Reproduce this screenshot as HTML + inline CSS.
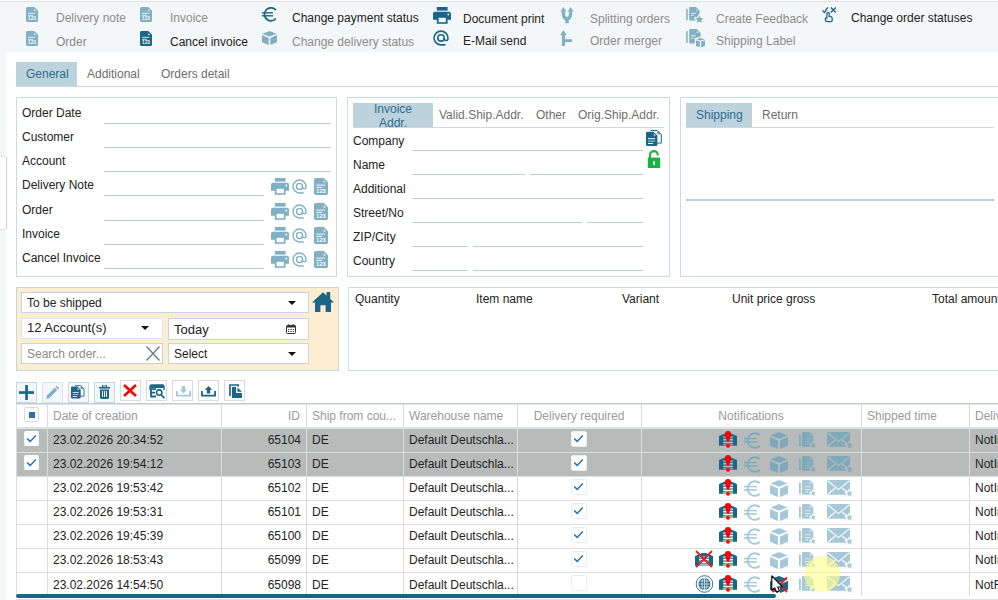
<!DOCTYPE html>
<html><head><meta charset="utf-8">
<style>
*{box-sizing:border-box;margin:0;padding:0}
html,body{width:998px;height:600px;overflow:hidden;background:#f3f7f7;font-family:"Liberation Sans",sans-serif;font-size:12px;color:#222}
.a{position:absolute}
.t{position:absolute;white-space:nowrap;line-height:14px}
#tb{left:0;top:0;width:998px;height:52px;background:#f3f7f7;border-top:1px solid #fff;box-shadow:inset 0 1px 0 #dfe2e2}
#main{left:6px;top:52px;width:992px;height:548px;background:#fff}
.dis{color:#8c8c8c}
.ic{position:absolute}
.box{position:absolute;border:1px solid #c9dbe4;background:#fff}
.lbl{position:absolute;white-space:nowrap;color:#222;line-height:14px}
.ul{position:absolute;height:1px;background:#b9d0dc}
.tab{position:absolute;white-space:nowrap;line-height:14px;color:#6e6e6e}
.tabon{position:absolute;background:#bcd3dd;color:#2d6e8e}
.inp{position:absolute;background:#fff;border:1px solid #c3d6df}
.btn{position:absolute;width:21px;height:21px;border:1px solid #dfe6ea;background:#f4f7f9}
.hd{position:absolute;white-space:nowrap;color:#9a9a9a;line-height:14px}
.cell{position:absolute;white-space:nowrap;color:#222;line-height:14px}
</style></head><body>
<div id="tb" class="a"></div>
<div id="main" class="a"></div>
<div class="a" style="left:0;top:157px;width:6px;height:72px;background:#fff;box-shadow:1px 0 0 #d2d2d2,0 0 2px rgba(0,0,0,.25)"></div>
<svg class="a" style="left:26px;top:7px" width="12" height="15" viewBox="0 0 12 15" ><g transform="scale(1.0 1.0)"><path d="M1.5 0H8.3L12 3.7V13.5A1.5 1.5 0 0 1 10.5 15H1.5A1.5 1.5 0 0 1 0 13.5V1.5A1.5 1.5 0 0 1 1.5 0Z" fill="#7fb0c4"/><path d="M8.2 2V4H10.2Z" fill="#f3f7f7"/><rect x="2" y="5.8" width="7.5" height="0.9" fill="#f3f7f7" opacity=".9"/><rect x="2" y="7.8" width="5" height="0.9" fill="#f3f7f7" opacity=".9"/><text x="6" y="13.2" text-anchor="middle" font-family="Liberation Sans" font-size="4.6" font-weight="bold" fill="#f3f7f7" textLength="8" lengthAdjust="spacingAndGlyphs">123</text></g></svg>
<svg class="a" style="left:26px;top:31px" width="12" height="15" viewBox="0 0 12 15" ><g transform="scale(1.0 1.0)"><path d="M1.5 0H8.3L12 3.7V13.5A1.5 1.5 0 0 1 10.5 15H1.5A1.5 1.5 0 0 1 0 13.5V1.5A1.5 1.5 0 0 1 1.5 0Z" fill="#7fb0c4"/><path d="M8.2 2V4H10.2Z" fill="#f3f7f7"/><rect x="2" y="5.8" width="7.5" height="0.9" fill="#f3f7f7" opacity=".9"/><rect x="2" y="7.8" width="5" height="0.9" fill="#f3f7f7" opacity=".9"/><text x="6" y="13.2" text-anchor="middle" font-family="Liberation Sans" font-size="4.6" font-weight="bold" fill="#f3f7f7" textLength="8" lengthAdjust="spacingAndGlyphs">123</text></g></svg>
<svg class="a" style="left:140px;top:7px" width="12" height="15" viewBox="0 0 12 15" ><g transform="scale(1.0 1.0)"><path d="M1.5 0H8.3L12 3.7V13.5A1.5 1.5 0 0 1 10.5 15H1.5A1.5 1.5 0 0 1 0 13.5V1.5A1.5 1.5 0 0 1 1.5 0Z" fill="#7fb0c4"/><path d="M8.2 2V4H10.2Z" fill="#f3f7f7"/><rect x="2" y="5.8" width="7.5" height="0.9" fill="#f3f7f7" opacity=".9"/><rect x="2" y="7.8" width="5" height="0.9" fill="#f3f7f7" opacity=".9"/><text x="6" y="13.2" text-anchor="middle" font-family="Liberation Sans" font-size="4.6" font-weight="bold" fill="#f3f7f7" textLength="8" lengthAdjust="spacingAndGlyphs">123</text></g></svg>
<svg class="a" style="left:140px;top:31px" width="12" height="15" viewBox="0 0 12 15" ><g transform="scale(1.0 1.0)"><path d="M1.5 0H8.3L12 3.7V13.5A1.5 1.5 0 0 1 10.5 15H1.5A1.5 1.5 0 0 1 0 13.5V1.5A1.5 1.5 0 0 1 1.5 0Z" fill="#1b6688"/><path d="M8.2 2V4H10.2Z" fill="#f3f7f7"/><rect x="2" y="5.8" width="7.5" height="0.9" fill="#f3f7f7" opacity=".9"/><rect x="2" y="7.8" width="5" height="0.9" fill="#f3f7f7" opacity=".9"/><text x="6" y="13.2" text-anchor="middle" font-family="Liberation Sans" font-size="4.6" font-weight="bold" fill="#f3f7f7" textLength="8" lengthAdjust="spacingAndGlyphs">123</text></g></svg>
<div class="t dis" style="left:56px;top:11px;">Delivery note</div>
<div class="t dis" style="left:56px;top:35px;">Order</div>
<div class="t dis" style="left:170px;top:11px;">Invoice</div>
<div class="t" style="left:170px;top:35px;">Cancel invoice</div>
<svg class="a" style="left:262px;top:7px" width="15" height="15" viewBox="0 0 15 15" ><g transform="scale(1.0 1.0)"><path d="M13.9 3.1A6.5 6.5 0 1 0 13.9 11.5" fill="none" stroke="#1b6688" stroke-width="1.8"/><rect x="0" y="5.1" width="11" height="1.4" fill="#1b6688"/><rect x="0" y="8.1" width="11" height="1.4" fill="#1b6688"/></g></svg>
<svg class="a" style="left:262px;top:31px" width="15" height="14" viewBox="0 0 15 14" ><g transform="scale(1.0 1.0)"><path d="M7.5 0L14.6 2.8L7.5 5.6L0.4 2.8Z" fill="#7fb0c4"/><path d="M0 4.1L6.7 6.9V14L0 11.3Z" fill="#7fb0c4"/><path d="M8.3 6.9L15 4.1V11.3L8.3 14Z" fill="#7fb0c4"/></g></svg>
<div class="t" style="left:292px;top:11px;">Change payment status</div>
<div class="t dis" style="left:292px;top:35px;">Change delivery status</div>
<svg class="a" style="left:433px;top:7px" width="18" height="17" viewBox="0 0 18 17" ><rect x="3.8" y="0" width="10.8" height="3.6" fill="#1b6688"/><path d="M2 4.8H16A2 2 0 0 1 18 6.8V12.8H0V6.8A2 2 0 0 1 2 4.8Z" fill="#1b6688"/><rect x="3.8" y="9.6" width="10.8" height="7.2" fill="#1b6688"/><rect x="5.6" y="10.8" width="7.2" height="4.4" fill="#f3f7f7"/><circle cx="15.3" cy="7.5" r="0.9" fill="#f3f7f7"/></svg>
<svg class="a" style="left:433px;top:30px" width="16" height="16" viewBox="0 0 16 16" ><g transform="scale(1.0)"><path d="M12.5 14.9H8A6.9 6.9 0 1 1 14.9 8V9.2A1.9 1.9 0 0 1 11.2 8.6" fill="none" stroke="#1b6688" stroke-width="1.6"/><circle cx="8" cy="7.9" r="3.2" fill="none" stroke="#1b6688" stroke-width="1.6"/></g></svg>
<div class="t" style="left:463px;top:12px;">Document print</div>
<div class="t" style="left:463px;top:34px;">E-Mail send</div>
<svg class="a" style="left:559px;top:7px" width="16" height="17" viewBox="0 0 16 17" ><path d="M4.4 4.6V7Q4.4 11 8 12.2Q11.6 11 11.6 7V4.6" fill="none" stroke="#7fb0c4" stroke-width="3.3"/><path d="M1.4 4.8L4.4 0L7.4 4.8Z" fill="#7fb0c4"/><path d="M8.6 4.8L11.6 0L14.6 4.8Z" fill="#7fb0c4"/><rect x="6.25" y="11" width="3.5" height="5.2" fill="#7fb0c4"/></svg>
<svg class="a" style="left:559px;top:30px" width="14" height="16" viewBox="0 0 14 16" ><path d="M1.2 5.2L4.4 0L7.6 5.2Z" fill="#7fb0c4"/><rect x="2.9" y="4.8" width="3.2" height="11.2" fill="#7fb0c4"/><rect x="5.5" y="9.2" width="7.5" height="2.8" fill="#7fb0c4"/></svg>
<div class="t dis" style="left:590px;top:12px;">Splitting orders</div>
<div class="t dis" style="left:590px;top:34px;">Order merger</div>
<svg class="a" style="left:686px;top:7px" width="18" height="18" viewBox="0 0 18 18" ><rect x="0.2" y="2" width="1.5" height="11.4" fill="#7fb0c4"/><path d="M4.2 0H10L13.6 3.6V12.6A1 1 0 0 1 12.6 13.6H4.2A1 1 0 0 1 3.2 12.6V1A1 1 0 0 1 4.2 0Z" fill="#7fb0c4"/><path d="M10.1 1.9V3.6H11.8Z" fill="#f3f7f7"/><rect x="5" y="6" width="4.6" height="0.9" fill="#f3f7f7"/><rect x="5" y="8.1" width="2.6" height="0.9" fill="#f3f7f7"/><path d="M13.40,8.30L14.54,11.03L17.49,11.27L15.24,13.20L15.93,16.08L13.40,14.54L10.87,16.08L11.56,13.20L9.31,11.27L12.26,11.03Z" fill="#f3f7f7" stroke="#f3f7f7" stroke-width="2.4" stroke-linejoin="round"/><path d="M13.40,8.30L14.54,11.03L17.49,11.27L15.24,13.20L15.93,16.08L13.40,14.54L10.87,16.08L11.56,13.20L9.31,11.27L12.26,11.03Z" fill="#7fb0c4"/></svg>
<svg class="a" style="left:686px;top:29px" width="21" height="20" viewBox="0 0 21 20" ><rect x="0.2" y="2" width="1.5" height="11.8" fill="#7fb0c4"/><path d="M4.2 0H10.6L14.6 4V13.6A1 1 0 0 1 13.6 14.6H4.2A1 1 0 0 1 3.2 13.6V1A1 1 0 0 1 4.2 0Z" fill="#7fb0c4"/><path d="M10.8 1.9V3.8H12.7Z" fill="#f3f7f7"/><rect x="5" y="6.4" width="4.8" height="0.9" fill="#f3f7f7"/><rect x="5" y="8.6" width="2.6" height="0.9" fill="#f3f7f7"/><path d="M8.8 9.2L14.5 7.6L20.4 9.2V17.2L14.5 19L8.8 17.2Z" fill="#f3f7f7"/><path d="M10.2 10.2L14.5 8.9L18.9 10.2L14.5 11.4Z" fill="#7fb0c4"/><path d="M10 11.3L13.9 12.4V18.2L10 17Z" fill="#7fb0c4"/><path d="M15.1 12.4L19 11.3V17L15.1 18.2Z" fill="#7fb0c4"/></svg>
<div class="t dis" style="left:716px;top:12px;">Create Feedback</div>
<div class="t dis" style="left:716px;top:34px;">Shipping Label</div>
<svg class="a" style="left:822px;top:7px" width="15" height="17" viewBox="0 0 15 17" ><path d="M0.5 3.5L2.5 5.4L5.8 0.4" fill="none" stroke="#1b6688" stroke-width="1.4"/><path d="M8.8 0.6L13.8 5.6M13.8 0.6L8.8 5.6" fill="none" stroke="#1b6688" stroke-width="1.4"/><path d="M4.9 11.4V6.6A1.15 1.15 0 0 1 7.2 6.6V9.4H8A2.2 2.2 0 0 1 10.2 11.6V13.2A1.4 1.4 0 0 1 8.8 14.6H5.2A1.8 1.8 0 0 1 3.4 12.8V12.2A0.8 0.8 0 0 1 4.9 11.4Z" fill="none" stroke="#1b6688" stroke-width="1.3"/></svg>
<div class="t" style="left:851px;top:11px;">Change order statuses</div>
<div class="a" style="left:16px;top:86px;width:982px;height:1px;background:#c9dbe4;"></div>
<div class="a" style="left:16px;top:62px;width:61px;height:24px;background:#bcd3dd;"></div>
<div class="t" style="left:26px;top:67px;color:#2d6e8e">General</div>
<div class="tab" style="left:87px;top:67px;">Additional</div>
<div class="tab" style="left:161px;top:67px;">Orders detail</div>
<div class="box" style="left:16px;top:97px;width:321px;height:180px"></div>
<div class="lbl" style="left:22px;top:106px;">Order Date</div>
<div class="lbl" style="left:22px;top:130px;">Customer</div>
<div class="lbl" style="left:22px;top:154px;">Account</div>
<div class="lbl" style="left:22px;top:178px;">Delivery Note</div>
<div class="lbl" style="left:22px;top:203px;">Order</div>
<div class="lbl" style="left:22px;top:227px;">Invoice</div>
<div class="lbl" style="left:22px;top:251px;">Cancel Invoice</div>
<div class="a" style="left:104px;top:123px;width:227px;height:1px;background:#b9d0dc;"></div>
<div class="a" style="left:104px;top:147px;width:227px;height:1px;background:#b9d0dc;"></div>
<div class="a" style="left:104px;top:171px;width:227px;height:1px;background:#b9d0dc;"></div>
<div class="a" style="left:104px;top:195px;width:160px;height:1px;background:#b9d0dc;"></div>
<svg class="a" style="left:271px;top:178px" width="18" height="17" viewBox="0 0 18 17" ><rect x="3.8" y="0" width="10.8" height="3.6" fill="#7fb0c4"/><path d="M2 4.8H16A2 2 0 0 1 18 6.8V12.8H0V6.8A2 2 0 0 1 2 4.8Z" fill="#7fb0c4"/><rect x="3.8" y="9.6" width="10.8" height="7.2" fill="#7fb0c4"/><rect x="5.6" y="10.8" width="7.2" height="4.4" fill="#fff"/><circle cx="15.3" cy="7.5" r="0.9" fill="#fff"/></svg>
<svg class="a" style="left:292px;top:179px" width="15" height="15" viewBox="0 0 15 15" ><g transform="scale(0.9375)"><path d="M12.5 14.9H8A6.9 6.9 0 1 1 14.9 8V9.2A1.9 1.9 0 0 1 11.2 8.6" fill="none" stroke="#7fb0c4" stroke-width="1.5"/><circle cx="8" cy="7.9" r="3.2" fill="none" stroke="#7fb0c4" stroke-width="1.5"/></g></svg>
<svg class="a" style="left:314px;top:178px" width="14" height="17" viewBox="0 0 14 17" ><g transform="scale(1.1666666666666667 1.1333333333333333)"><path d="M1.5 0H8.3L12 3.7V13.5A1.5 1.5 0 0 1 10.5 15H1.5A1.5 1.5 0 0 1 0 13.5V1.5A1.5 1.5 0 0 1 1.5 0Z" fill="#7fb0c4"/><path d="M8.2 2V4H10.2Z" fill="#fff"/><rect x="2" y="5.8" width="7.5" height="0.9" fill="#fff" opacity=".9"/><rect x="2" y="7.8" width="5" height="0.9" fill="#fff" opacity=".9"/><text x="6" y="13.2" text-anchor="middle" font-family="Liberation Sans" font-size="4.6" font-weight="bold" fill="#fff" textLength="8" lengthAdjust="spacingAndGlyphs">123</text></g></svg>
<div class="a" style="left:104px;top:220px;width:160px;height:1px;background:#b9d0dc;"></div>
<svg class="a" style="left:271px;top:203px" width="18" height="17" viewBox="0 0 18 17" ><rect x="3.8" y="0" width="10.8" height="3.6" fill="#7fb0c4"/><path d="M2 4.8H16A2 2 0 0 1 18 6.8V12.8H0V6.8A2 2 0 0 1 2 4.8Z" fill="#7fb0c4"/><rect x="3.8" y="9.6" width="10.8" height="7.2" fill="#7fb0c4"/><rect x="5.6" y="10.8" width="7.2" height="4.4" fill="#fff"/><circle cx="15.3" cy="7.5" r="0.9" fill="#fff"/></svg>
<svg class="a" style="left:292px;top:204px" width="15" height="15" viewBox="0 0 15 15" ><g transform="scale(0.9375)"><path d="M12.5 14.9H8A6.9 6.9 0 1 1 14.9 8V9.2A1.9 1.9 0 0 1 11.2 8.6" fill="none" stroke="#7fb0c4" stroke-width="1.5"/><circle cx="8" cy="7.9" r="3.2" fill="none" stroke="#7fb0c4" stroke-width="1.5"/></g></svg>
<svg class="a" style="left:314px;top:203px" width="14" height="17" viewBox="0 0 14 17" ><g transform="scale(1.1666666666666667 1.1333333333333333)"><path d="M1.5 0H8.3L12 3.7V13.5A1.5 1.5 0 0 1 10.5 15H1.5A1.5 1.5 0 0 1 0 13.5V1.5A1.5 1.5 0 0 1 1.5 0Z" fill="#7fb0c4"/><path d="M8.2 2V4H10.2Z" fill="#fff"/><rect x="2" y="5.8" width="7.5" height="0.9" fill="#fff" opacity=".9"/><rect x="2" y="7.8" width="5" height="0.9" fill="#fff" opacity=".9"/><text x="6" y="13.2" text-anchor="middle" font-family="Liberation Sans" font-size="4.6" font-weight="bold" fill="#fff" textLength="8" lengthAdjust="spacingAndGlyphs">123</text></g></svg>
<div class="a" style="left:104px;top:244px;width:160px;height:1px;background:#b9d0dc;"></div>
<svg class="a" style="left:271px;top:227px" width="18" height="17" viewBox="0 0 18 17" ><rect x="3.8" y="0" width="10.8" height="3.6" fill="#7fb0c4"/><path d="M2 4.8H16A2 2 0 0 1 18 6.8V12.8H0V6.8A2 2 0 0 1 2 4.8Z" fill="#7fb0c4"/><rect x="3.8" y="9.6" width="10.8" height="7.2" fill="#7fb0c4"/><rect x="5.6" y="10.8" width="7.2" height="4.4" fill="#fff"/><circle cx="15.3" cy="7.5" r="0.9" fill="#fff"/></svg>
<svg class="a" style="left:292px;top:228px" width="15" height="15" viewBox="0 0 15 15" ><g transform="scale(0.9375)"><path d="M12.5 14.9H8A6.9 6.9 0 1 1 14.9 8V9.2A1.9 1.9 0 0 1 11.2 8.6" fill="none" stroke="#7fb0c4" stroke-width="1.5"/><circle cx="8" cy="7.9" r="3.2" fill="none" stroke="#7fb0c4" stroke-width="1.5"/></g></svg>
<svg class="a" style="left:314px;top:227px" width="14" height="17" viewBox="0 0 14 17" ><g transform="scale(1.1666666666666667 1.1333333333333333)"><path d="M1.5 0H8.3L12 3.7V13.5A1.5 1.5 0 0 1 10.5 15H1.5A1.5 1.5 0 0 1 0 13.5V1.5A1.5 1.5 0 0 1 1.5 0Z" fill="#7fb0c4"/><path d="M8.2 2V4H10.2Z" fill="#fff"/><rect x="2" y="5.8" width="7.5" height="0.9" fill="#fff" opacity=".9"/><rect x="2" y="7.8" width="5" height="0.9" fill="#fff" opacity=".9"/><text x="6" y="13.2" text-anchor="middle" font-family="Liberation Sans" font-size="4.6" font-weight="bold" fill="#fff" textLength="8" lengthAdjust="spacingAndGlyphs">123</text></g></svg>
<div class="a" style="left:104px;top:268px;width:160px;height:1px;background:#b9d0dc;"></div>
<svg class="a" style="left:271px;top:251px" width="18" height="17" viewBox="0 0 18 17" ><rect x="3.8" y="0" width="10.8" height="3.6" fill="#7fb0c4"/><path d="M2 4.8H16A2 2 0 0 1 18 6.8V12.8H0V6.8A2 2 0 0 1 2 4.8Z" fill="#7fb0c4"/><rect x="3.8" y="9.6" width="10.8" height="7.2" fill="#7fb0c4"/><rect x="5.6" y="10.8" width="7.2" height="4.4" fill="#fff"/><circle cx="15.3" cy="7.5" r="0.9" fill="#fff"/></svg>
<svg class="a" style="left:292px;top:252px" width="15" height="15" viewBox="0 0 15 15" ><g transform="scale(0.9375)"><path d="M12.5 14.9H8A6.9 6.9 0 1 1 14.9 8V9.2A1.9 1.9 0 0 1 11.2 8.6" fill="none" stroke="#7fb0c4" stroke-width="1.5"/><circle cx="8" cy="7.9" r="3.2" fill="none" stroke="#7fb0c4" stroke-width="1.5"/></g></svg>
<svg class="a" style="left:314px;top:251px" width="14" height="17" viewBox="0 0 14 17" ><g transform="scale(1.1666666666666667 1.1333333333333333)"><path d="M1.5 0H8.3L12 3.7V13.5A1.5 1.5 0 0 1 10.5 15H1.5A1.5 1.5 0 0 1 0 13.5V1.5A1.5 1.5 0 0 1 1.5 0Z" fill="#7fb0c4"/><path d="M8.2 2V4H10.2Z" fill="#fff"/><rect x="2" y="5.8" width="7.5" height="0.9" fill="#fff" opacity=".9"/><rect x="2" y="7.8" width="5" height="0.9" fill="#fff" opacity=".9"/><text x="6" y="13.2" text-anchor="middle" font-family="Liberation Sans" font-size="4.6" font-weight="bold" fill="#fff" textLength="8" lengthAdjust="spacingAndGlyphs">123</text></g></svg>
<div class="box" style="left:347px;top:97px;width:323px;height:180px"></div>
<div class="a" style="left:353px;top:127px;width:311px;height:1px;background:#c9dbe4;"></div>
<div class="a" style="left:353px;top:103px;width:80px;height:24px;background:#bcd3dd;"></div>
<div class="t" style="left:353px;top:102px;width:80px;text-align:center;line-height:14px;color:#2d6e8e">Invoice<br>Addr.</div>
<div class="tab" style="left:439px;top:108px;">Valid.Ship.Addr.</div>
<div class="tab" style="left:536px;top:108px;">Other</div>
<div class="tab" style="left:578px;top:108px;">Orig.Ship.Addr.</div>
<div class="lbl" style="left:353px;top:134px;">Company</div>
<div class="lbl" style="left:353px;top:158px;">Name</div>
<div class="lbl" style="left:353px;top:182px;">Additional</div>
<div class="lbl" style="left:353px;top:206px;">Street/No</div>
<div class="lbl" style="left:353px;top:230px;">ZIP/City</div>
<div class="lbl" style="left:353px;top:254px;">Country</div>
<div class="a" style="left:412px;top:150px;width:231px;height:1px;background:#b9d0dc;"></div>
<div class="a" style="left:412px;top:174px;width:113px;height:1px;background:#b9d0dc;"></div>
<div class="a" style="left:530px;top:174px;width:113px;height:1px;background:#b9d0dc;"></div>
<div class="a" style="left:412px;top:198px;width:231px;height:1px;background:#b9d0dc;"></div>
<div class="a" style="left:412px;top:222px;width:170px;height:1px;background:#b9d0dc;"></div>
<div class="a" style="left:587px;top:222px;width:56px;height:1px;background:#b9d0dc;"></div>
<div class="a" style="left:412px;top:246px;width:56px;height:1px;background:#b9d0dc;"></div>
<div class="a" style="left:473px;top:246px;width:170px;height:1px;background:#b9d0dc;"></div>
<div class="a" style="left:412px;top:270px;width:56px;height:1px;background:#b9d0dc;"></div>
<div class="a" style="left:473px;top:270px;width:170px;height:1px;background:#b9d0dc;"></div>
<svg class="a" style="left:646px;top:130px" width="17" height="18" viewBox="0 0 17 18" ><g transform="scale(1.0)"><path d="M4.7 0.5H11.3L15.3 4.5V13.1H11" fill="#fff" stroke="#1b6688" stroke-width="1"/><path d="M11.4 1.2V4.3H14.5Z" fill="#1b6688"/><path d="M11.9 2.6V3.8H13.1Z" fill="#fff"/><path d="M1.2 1.8H7.6L11.4 5.6V14.8A1.2 1.2 0 0 1 10.2 16H1.2A1.2 1.2 0 0 1 0 14.8V3A1.2 1.2 0 0 1 1.2 1.8Z" fill="#1b6688"/><path d="M7.8 3.4V5.5H9.9Z" fill="#fff"/><rect x="2" y="8.2" width="7" height="1" fill="#fff"/><rect x="2" y="10.6" width="7" height="1.2" fill="#fff" opacity=".55"/><rect x="2" y="13" width="5" height="1" fill="#fff"/></g></svg>
<svg class="a" style="left:647px;top:150px" width="14" height="19" viewBox="0 0 14 19" ><path d="M3 8V5A3.9 3.9 0 0 1 10.8 5V5.5" fill="none" stroke="#1ab341" stroke-width="2.2"/><rect x="0.8" y="7.6" width="12.4" height="10.4" fill="#1ab341"/><rect x="6.2" y="11.2" width="1.8" height="3.8" fill="#fff"/></svg>
<div class="box" style="left:680px;top:97px;width:330px;height:180px"></div>
<div class="a" style="left:686px;top:127px;width:308px;height:1px;background:#c9dbe4;"></div>
<div class="a" style="left:686px;top:103px;width:66px;height:24px;background:#bcd3dd;"></div>
<div class="t" style="left:696px;top:108px;color:#2d6e8e">Shipping</div>
<div class="tab" style="left:762px;top:108px;">Return</div>
<div class="a" style="left:686px;top:199px;width:308px;height:2px;background:#bcd0da;"></div>
<div class="a" style="left:16px;top:287px;width:323px;height:84px;background:#fdeed1;border:1px solid #c3d7e0"></div>
<div class="inp" style="left:21px;top:292px;width:288px;height:21px"></div>
<div class="t" style="left:27px;top:296px;">To be shipped</div>
<svg class="a" style="left:288px;top:301px" width="8" height="4" viewBox="0 0 8 4" ><path d="M0 0H8L4 4Z" fill="#111"/></svg>
<svg class="a" style="left:312px;top:292px" width="22" height="20" viewBox="0 0 22 20" ><path d="M11 0.2L14.5 3.4V0H18.2V6.8L22 10.6H19V20H13.6V13.2H8.4V20H3V10.6H0Z" fill="#1b6688"/></svg>
<div class="inp" style="left:21px;top:318px;width:142px;height:21px;border-color:#dbe4e8"></div>
<div class="t" style="left:27px;top:320px;font-size:13px;line-height:16px">12 Account(s)</div>
<svg class="a" style="left:141px;top:326px" width="8" height="4" viewBox="0 0 8 4" ><path d="M0 0H8L4 4Z" fill="#111"/></svg>
<div class="inp" style="left:168px;top:318px;width:141px;height:22px"></div>
<div class="t" style="left:174px;top:322px;font-size:13px;line-height:16px">Today</div>
<svg class="a" style="left:286px;top:324px" width="10" height="10" viewBox="0 0 10 10" ><rect x="0.5" y="1.5" width="9" height="8" rx="1" fill="none" stroke="#333" stroke-width="1"/><rect x="0.5" y="1.5" width="9" height="2" fill="#333"/><rect x="2.3" y="0" width="1" height="2" fill="#333"/><rect x="6.7" y="0" width="1" height="2" fill="#333"/><rect x="2" y="5" width="1.2" height="1" fill="#333"/><rect x="4.4" y="5" width="1.2" height="1" fill="#333"/><rect x="6.8" y="5" width="1.2" height="1" fill="#333"/><rect x="2" y="7" width="1.2" height="1" fill="#333"/><rect x="4.4" y="7" width="1.2" height="1" fill="#333"/><rect x="6.8" y="7" width="1.2" height="1" fill="#333"/></svg>
<div class="inp" style="left:21px;top:343px;width:142px;height:21px"></div>
<div class="t" style="left:27px;top:347px;color:#8a8a8a">Search order...</div>
<svg class="a" style="left:146px;top:346px" width="14" height="15" viewBox="0 0 14 15" ><path d="M0.5 0.5L13.5 14.5M13.5 0.5L0.5 14.5" stroke="#5f7f8e" stroke-width="1.3"/></svg>
<div class="inp" style="left:168px;top:343px;width:141px;height:21px"></div>
<div class="t" style="left:174px;top:347px;">Select</div>
<svg class="a" style="left:288px;top:352px" width="8" height="4" viewBox="0 0 8 4" ><path d="M0 0H8L4 4Z" fill="#111"/></svg>
<div class="box" style="left:348px;top:287px;width:660px;height:84px"></div>
<div class="t" style="left:355px;top:292px;">Quantity</div>
<div class="t" style="left:476px;top:292px;">Item name</div>
<div class="t" style="left:622px;top:292px;">Variant</div>
<div class="t" style="left:732px;top:292px;">Unit price gross</div>
<div class="t" style="left:932px;top:292px;">Total amount</div>
<div class="btn" style="left:16px;top:382px;border-color:#c6d9e2"></div>
<div class="btn" style="left:42px;top:382px;border-color:#d9e5ea"></div>
<div class="btn" style="left:68px;top:382px;border-color:#c6d9e2"></div>
<div class="btn" style="left:94px;top:382px;border-color:#c6d9e2"></div>
<div class="btn" style="left:120px;top:380px;border-color:#dadada;background:#fff"></div>
<div class="btn" style="left:146px;top:380px;border-color:#dadada;background:#fff"></div>
<div class="btn" style="left:172px;top:380px;border-color:#dadada;background:#fff"></div>
<div class="btn" style="left:198px;top:380px;border-color:#dadada;background:#fff"></div>
<div class="btn" style="left:224px;top:380px;border-color:#dadada;background:#fff"></div>
<svg class="a" style="left:19px;top:385px" width="15" height="15" viewBox="0 0 15 15" ><rect x="6.2" y="0" width="2.7" height="15" fill="#1b6688"/><rect x="0" y="6.2" width="15" height="2.7" fill="#1b6688"/></svg>
<svg class="a" style="left:45px;top:386px" width="14" height="14" viewBox="0 0 14 14" ><path d="M1.2 12.8L2 9.6L9.8 1.8L12.2 4.2L4.4 12Z" fill="#7fb0c4"/><path d="M10.6 1L11.8 -0.2L14.2 2.2L13 3.4Z" fill="#7fb0c4"/></svg>
<svg class="a" style="left:71.4px;top:385px" width="14" height="15" viewBox="0 0 14 15" ><g transform="scale(0.85)"><path d="M4.7 0.5H11.3L15.3 4.5V13.1H11" fill="#f3f7f7" stroke="#1b6688" stroke-width="1"/><path d="M11.4 1.2V4.3H14.5Z" fill="#1b6688"/><path d="M11.9 2.6V3.8H13.1Z" fill="#f3f7f7"/><path d="M1.2 1.8H7.6L11.4 5.6V14.8A1.2 1.2 0 0 1 10.2 16H1.2A1.2 1.2 0 0 1 0 14.8V3A1.2 1.2 0 0 1 1.2 1.8Z" fill="#1b6688"/><path d="M7.8 3.4V5.5H9.9Z" fill="#f3f7f7"/><rect x="2" y="8.2" width="7" height="1" fill="#f3f7f7"/><rect x="2" y="10.6" width="7" height="1.2" fill="#f3f7f7" opacity=".55"/><rect x="2" y="13" width="5" height="1" fill="#f3f7f7"/></g></svg>
<svg class="a" style="left:99px;top:385px" width="11" height="14" viewBox="0 0 11 14" ><rect x="0" y="2" width="11" height="1.6" fill="#1b6688"/><rect x="3.5" y="0" width="4" height="2" fill="none" stroke="#1b6688" stroke-width="1"/><path d="M1 4.4H10V12.6A1.3 1.3 0 0 1 8.7 13.9H2.3A1.3 1.3 0 0 1 1 12.6Z" fill="#1b6688"/><rect x="3" y="6" width="1" height="6" fill="#fff"/><rect x="5" y="6" width="1" height="6" fill="#fff"/><rect x="7" y="6" width="1" height="6" fill="#fff"/></svg>
<svg class="a" style="left:123px;top:384px" width="14" height="13" viewBox="0 0 14 13" ><path d="M1 1L13 12M13 1L1 12" stroke="#f00" stroke-width="2.6"/></svg>
<svg class="a" style="left:149px;top:384px" width="17" height="16" viewBox="0 0 17 16" ><path d="M1 6V2.6A1.6 1.6 0 0 1 2.6 1H13.4A1.6 1.6 0 0 1 15 2.6V6" fill="none" stroke="#1b6688" stroke-width="1.4"/><rect x="1" y="1" width="14" height="3" rx="1.2" fill="#1b6688"/><path d="M7 5.1H2V12.5H7M2 8.6H6" fill="none" stroke="#1b6688" stroke-width="1.8"/><circle cx="10.2" cy="8.6" r="2.7" fill="none" stroke="#1b6688" stroke-width="1.6"/><path d="M12 10.6L15.4 14.2" stroke="#1b6688" stroke-width="1.7"/></svg>
<svg class="a" style="left:176px;top:386px" width="15" height="11" viewBox="0 0 15 11" ><path d="M0.9 5V9.7H14.1V5" fill="none" stroke="#a6c8d6" stroke-width="1.8"/><path d="M5.8 0H9.2V3.6H11.2L7.5 7.4L3.8 3.6H5.8Z" fill="#a6c8d6"/></svg>
<svg class="a" style="left:201px;top:386px" width="15" height="11" viewBox="0 0 15 11" ><path d="M0.9 5V9.7H14.1V5" fill="none" stroke="#1b6688" stroke-width="1.8"/><path d="M5.8 7.4H9.2V3.8H11.2L7.5 0L3.8 3.8H5.8Z" fill="#1b6688"/></svg>
<svg class="a" style="left:228px;top:383px" width="16" height="17" viewBox="0 0 16 17" ><path d="M2 13V2H10.2V3.6" fill="none" stroke="#1b6688" stroke-width="1.7"/><path d="M4 4.1H8V10H14V15H4Z" fill="#1b6688"/><path d="M9.4 4.4L14 8.7H9.4Z" fill="#1b6688"/></svg>
<div class="a" style="left:16px;top:403px;width:982px;height:1px;background:#b9d0dc;"></div>
<div class="a" style="left:16px;top:404px;width:1px;height:192px;background:#dcdcdc;"></div>
<div class="a" style="left:17px;top:404px;width:981px;height:1px;background:#e3e3e3;"></div>
<div class="a" style="left:17px;top:429px;width:981px;height:23px;background:#b7bcbb;"></div>
<div class="a" style="left:17px;top:453px;width:981px;height:23px;background:#b7bcbb;"></div>
<div class="a" style="left:17px;top:427px;width:981px;height:2px;background:#e1e1e1;"></div>
<div class="a" style="left:17px;top:452px;width:981px;height:1px;background:#dedede;"></div>
<div class="a" style="left:17px;top:476px;width:981px;height:1px;background:#dedede;"></div>
<div class="a" style="left:17px;top:500px;width:981px;height:1px;background:#dedede;"></div>
<div class="a" style="left:17px;top:524px;width:981px;height:1px;background:#dedede;"></div>
<div class="a" style="left:17px;top:548px;width:981px;height:1px;background:#dedede;"></div>
<div class="a" style="left:17px;top:572px;width:981px;height:1px;background:#dedede;"></div>
<div class="a" style="left:47px;top:404px;width:1px;height:192px;background:#dcdcdc;"></div>
<div class="a" style="left:221px;top:404px;width:1px;height:192px;background:#dcdcdc;"></div>
<div class="a" style="left:306px;top:404px;width:1px;height:192px;background:#dcdcdc;"></div>
<div class="a" style="left:403px;top:404px;width:1px;height:192px;background:#dcdcdc;"></div>
<div class="a" style="left:517px;top:404px;width:1px;height:192px;background:#dcdcdc;"></div>
<div class="a" style="left:641px;top:404px;width:1px;height:192px;background:#dcdcdc;"></div>
<div class="a" style="left:861px;top:404px;width:1px;height:192px;background:#dcdcdc;"></div>
<div class="a" style="left:969px;top:404px;width:1px;height:192px;background:#dcdcdc;"></div>
<div class="a" style="left:24px;top:407px;width:15px;height:15px;background:#fff;border:1px solid #d6dde0;border-radius:2px"></div>
<div class="a" style="left:29px;top:412px;width:6px;height:6px;background:#2a6fae;"></div>
<div class="hd" style="left:53px;top:409px;">Date of creation</div>
<div class="hd" style="left:200px;top:409px;width:100px;text-align:right">ID</div>
<div class="hd" style="left:312px;top:409px;">Ship from cou...</div>
<div class="hd" style="left:409px;top:409px;">Warehouse name</div>
<div class="hd" style="left:504px;top:409px;width:150px;text-align:center">Delivery required</div>
<div class="hd" style="left:676px;top:409px;width:150px;text-align:center">Notifications</div>
<div class="hd" style="left:867px;top:409px;">Shipped time</div>
<div class="hd" style="left:975px;top:409px;">Delivery</div>
<div class="a" style="left:24px;top:431px;width:15px;height:15px;background:#fff;border-radius:2px"></div>
<svg class="a" style="left:24px;top:431px" width="15" height="15" viewBox="0 0 15 15" ><path d="M3.2 7.6L6.2 10.4L11.8 4.4" fill="none" stroke="#2a72b0" stroke-width="1.5"/></svg>
<div class="cell" style="left:53px;top:433px;">23.02.2026 20:34:52</div>
<div class="cell" style="left:201px;top:433px;width:100px;text-align:right">65104</div>
<div class="cell" style="left:312px;top:433px;">DE</div>
<div class="cell" style="left:409px;top:433px;">Default Deutschla...</div>
<div class="a" style="left:571px;top:431px;width:16px;height:16px;background:#fff;border:1px solid #eceff0;border-radius:2px"></div>
<svg class="a" style="left:571px;top:431px" width="15" height="15" viewBox="0 0 15 15" ><path d="M3.2 7.6L6.2 10.4L11.8 4.4" fill="none" stroke="#2a72b0" stroke-width="1.5"/></svg>
<div class="cell" style="left:975px;top:433px;">NotInitialized</div>
<svg class="a" style="left:719px;top:431px" width="18" height="17" viewBox="0 0 18 17" ><path d="M0 5L7 2H11L18 5V14.7H14V5.5H4.2V14.7H0Z" fill="#1b6688"/><rect x="4" y="6.7" width="10" height="1.1" fill="#1b6688"/><rect x="4" y="9.5" width="10" height="1.1" fill="#1b6688"/><rect x="4" y="12.3" width="10" height="1.1" fill="#1b6688"/><rect x="4" y="14.2" width="10" height="0.5" fill="#1b6688"/><path d="M6 3A3 3 0 0 1 12 3Q12 5 10 10.7H8Q6 5 6 3Z" fill="#f00"/><ellipse cx="9" cy="14.8" rx="2" ry="1.9" fill="#f00"/></svg>
<svg class="a" style="left:744px;top:432px" width="17" height="17" viewBox="0 0 17 17" ><path d="M15.8 3A7.3 7.3 0 1 0 15.8 14" fill="none" stroke="#7ea9bb" stroke-width="1.9"/><rect x="0" y="5.8" width="12.8" height="1.5" fill="#7ea9bb"/><rect x="0" y="9.2" width="12.8" height="1.5" fill="#7ea9bb"/></svg>
<svg class="a" style="left:770px;top:432px" width="18" height="17" viewBox="0 0 18 17" ><g transform="scale(1.2 1.2142857142857142)"><path d="M7.5 0L14.6 2.8L7.5 5.6L0.4 2.8Z" fill="#7ea9bb"/><path d="M0 4.1L6.7 6.9V14L0 11.3Z" fill="#7ea9bb"/><path d="M8.3 6.9L15 4.1V11.3L8.3 14Z" fill="#7ea9bb"/></g></svg>
<svg class="a" style="left:799px;top:432px" width="17" height="17" viewBox="0 0 17 17" ><rect x="0" y="2.7" width="1.8" height="11.4" fill="#7ea9bb"/><path d="M4.2 0H10.6L14.4 3.8V13.5A1.2 1.2 0 0 1 13.2 14.7H4.2A1.2 1.2 0 0 1 3 13.5V1.2A1.2 1.2 0 0 1 4.2 0Z" fill="#7ea9bb"/><path d="M10.8 1.8V3.6H12.6Z" fill="#b7bcbb"/><rect x="6" y="6.5" width="5.5" height="0.8" fill="#b7bcbb" opacity=".8"/><rect x="6" y="9.2" width="5.5" height="0.8" fill="#b7bcbb" opacity=".8"/><rect x="6" y="11.6" width="3" height="0.8" fill="#b7bcbb" opacity=".8"/><path d="M14.20,10.50L14.97,12.34L16.96,12.50L15.44,13.80L15.90,15.75L14.20,14.71L12.50,15.75L12.96,13.80L11.44,12.50L13.43,12.34Z" fill="#b7bcbb" stroke="#b7bcbb" stroke-width="2.2" stroke-linejoin="round"/><path d="M14.20,10.50L14.97,12.34L16.96,12.50L15.44,13.80L15.90,15.75L14.20,14.71L12.50,15.75L12.96,13.80L11.44,12.50L13.43,12.34Z" fill="#7ea9bb"/></svg>
<svg class="a" style="left:827px;top:432px" width="26" height="17" viewBox="0 0 26 17" ><path d="M0.8 0H22.2A0.8 0.8 0 0 1 23 0.8V14.7H0.8A0.8 0.8 0 0 1 0 13.9V0.8A0.8 0.8 0 0 1 0.8 0Z" fill="#7ea9bb"/><path d="M0.6 0.8L11.5 9.6L22.4 0.8" fill="none" stroke="#b7bcbb" stroke-width="1.1"/><path d="M0.8 14.2L8.2 8.2M21.5 12.5L15 8.2" fill="none" stroke="#b7bcbb" stroke-width="1.1"/><path d="M22.50,10.00L23.45,12.29L25.92,12.49L24.04,14.10L24.62,16.51L22.50,15.22L20.38,16.51L20.96,14.10L19.08,12.49L21.55,12.29Z" fill="#b7bcbb" stroke="#b7bcbb" stroke-width="2.4" stroke-linejoin="round"/><path d="M22.50,10.00L23.45,12.29L25.92,12.49L24.04,14.10L24.62,16.51L22.50,15.22L20.38,16.51L20.96,14.10L19.08,12.49L21.55,12.29Z" fill="#7ea9bb"/></svg>
<div class="a" style="left:24px;top:455px;width:15px;height:15px;background:#fff;border-radius:2px"></div>
<svg class="a" style="left:24px;top:455px" width="15" height="15" viewBox="0 0 15 15" ><path d="M3.2 7.6L6.2 10.4L11.8 4.4" fill="none" stroke="#2a72b0" stroke-width="1.5"/></svg>
<div class="cell" style="left:53px;top:457px;">23.02.2026 19:54:12</div>
<div class="cell" style="left:201px;top:457px;width:100px;text-align:right">65103</div>
<div class="cell" style="left:312px;top:457px;">DE</div>
<div class="cell" style="left:409px;top:457px;">Default Deutschla...</div>
<div class="a" style="left:571px;top:455px;width:16px;height:16px;background:#fff;border:1px solid #eceff0;border-radius:2px"></div>
<svg class="a" style="left:571px;top:455px" width="15" height="15" viewBox="0 0 15 15" ><path d="M3.2 7.6L6.2 10.4L11.8 4.4" fill="none" stroke="#2a72b0" stroke-width="1.5"/></svg>
<div class="cell" style="left:975px;top:457px;">NotInitialized</div>
<svg class="a" style="left:719px;top:455px" width="18" height="17" viewBox="0 0 18 17" ><path d="M0 5L7 2H11L18 5V14.7H14V5.5H4.2V14.7H0Z" fill="#1b6688"/><rect x="4" y="6.7" width="10" height="1.1" fill="#1b6688"/><rect x="4" y="9.5" width="10" height="1.1" fill="#1b6688"/><rect x="4" y="12.3" width="10" height="1.1" fill="#1b6688"/><rect x="4" y="14.2" width="10" height="0.5" fill="#1b6688"/><path d="M6 3A3 3 0 0 1 12 3Q12 5 10 10.7H8Q6 5 6 3Z" fill="#f00"/><ellipse cx="9" cy="14.8" rx="2" ry="1.9" fill="#f00"/></svg>
<svg class="a" style="left:744px;top:456px" width="17" height="17" viewBox="0 0 17 17" ><path d="M15.8 3A7.3 7.3 0 1 0 15.8 14" fill="none" stroke="#7ea9bb" stroke-width="1.9"/><rect x="0" y="5.8" width="12.8" height="1.5" fill="#7ea9bb"/><rect x="0" y="9.2" width="12.8" height="1.5" fill="#7ea9bb"/></svg>
<svg class="a" style="left:770px;top:456px" width="18" height="17" viewBox="0 0 18 17" ><g transform="scale(1.2 1.2142857142857142)"><path d="M7.5 0L14.6 2.8L7.5 5.6L0.4 2.8Z" fill="#7ea9bb"/><path d="M0 4.1L6.7 6.9V14L0 11.3Z" fill="#7ea9bb"/><path d="M8.3 6.9L15 4.1V11.3L8.3 14Z" fill="#7ea9bb"/></g></svg>
<svg class="a" style="left:799px;top:456px" width="17" height="17" viewBox="0 0 17 17" ><rect x="0" y="2.7" width="1.8" height="11.4" fill="#7ea9bb"/><path d="M4.2 0H10.6L14.4 3.8V13.5A1.2 1.2 0 0 1 13.2 14.7H4.2A1.2 1.2 0 0 1 3 13.5V1.2A1.2 1.2 0 0 1 4.2 0Z" fill="#7ea9bb"/><path d="M10.8 1.8V3.6H12.6Z" fill="#b7bcbb"/><rect x="6" y="6.5" width="5.5" height="0.8" fill="#b7bcbb" opacity=".8"/><rect x="6" y="9.2" width="5.5" height="0.8" fill="#b7bcbb" opacity=".8"/><rect x="6" y="11.6" width="3" height="0.8" fill="#b7bcbb" opacity=".8"/><path d="M14.20,10.50L14.97,12.34L16.96,12.50L15.44,13.80L15.90,15.75L14.20,14.71L12.50,15.75L12.96,13.80L11.44,12.50L13.43,12.34Z" fill="#b7bcbb" stroke="#b7bcbb" stroke-width="2.2" stroke-linejoin="round"/><path d="M14.20,10.50L14.97,12.34L16.96,12.50L15.44,13.80L15.90,15.75L14.20,14.71L12.50,15.75L12.96,13.80L11.44,12.50L13.43,12.34Z" fill="#7ea9bb"/></svg>
<svg class="a" style="left:827px;top:456px" width="26" height="17" viewBox="0 0 26 17" ><path d="M0.8 0H22.2A0.8 0.8 0 0 1 23 0.8V14.7H0.8A0.8 0.8 0 0 1 0 13.9V0.8A0.8 0.8 0 0 1 0.8 0Z" fill="#7ea9bb"/><path d="M0.6 0.8L11.5 9.6L22.4 0.8" fill="none" stroke="#b7bcbb" stroke-width="1.1"/><path d="M0.8 14.2L8.2 8.2M21.5 12.5L15 8.2" fill="none" stroke="#b7bcbb" stroke-width="1.1"/><path d="M22.50,10.00L23.45,12.29L25.92,12.49L24.04,14.10L24.62,16.51L22.50,15.22L20.38,16.51L20.96,14.10L19.08,12.49L21.55,12.29Z" fill="#b7bcbb" stroke="#b7bcbb" stroke-width="2.4" stroke-linejoin="round"/><path d="M22.50,10.00L23.45,12.29L25.92,12.49L24.04,14.10L24.62,16.51L22.50,15.22L20.38,16.51L20.96,14.10L19.08,12.49L21.55,12.29Z" fill="#7ea9bb"/></svg>
<div class="cell" style="left:53px;top:481px;">23.02.2026 19:53:42</div>
<div class="cell" style="left:201px;top:481px;width:100px;text-align:right">65102</div>
<div class="cell" style="left:312px;top:481px;">DE</div>
<div class="cell" style="left:409px;top:481px;">Default Deutschla...</div>
<div class="a" style="left:571px;top:479px;width:16px;height:16px;background:#fff;border:1px solid #eceff0;border-radius:2px"></div>
<svg class="a" style="left:571px;top:479px" width="15" height="15" viewBox="0 0 15 15" ><path d="M3.2 7.6L6.2 10.4L11.8 4.4" fill="none" stroke="#2a72b0" stroke-width="1.5"/></svg>
<div class="cell" style="left:975px;top:481px;">NotInitialized</div>
<svg class="a" style="left:719px;top:479px" width="18" height="17" viewBox="0 0 18 17" ><path d="M0 5L7 2H11L18 5V14.7H14V5.5H4.2V14.7H0Z" fill="#1b6688"/><rect x="4" y="6.7" width="10" height="1.1" fill="#1b6688"/><rect x="4" y="9.5" width="10" height="1.1" fill="#1b6688"/><rect x="4" y="12.3" width="10" height="1.1" fill="#1b6688"/><rect x="4" y="14.2" width="10" height="0.5" fill="#1b6688"/><path d="M6 3A3 3 0 0 1 12 3Q12 5 10 10.7H8Q6 5 6 3Z" fill="#f00"/><ellipse cx="9" cy="14.8" rx="2" ry="1.9" fill="#f00"/></svg>
<svg class="a" style="left:744px;top:480px" width="17" height="17" viewBox="0 0 17 17" ><path d="M15.8 3A7.3 7.3 0 1 0 15.8 14" fill="none" stroke="#a6c8d7" stroke-width="1.9"/><rect x="0" y="5.8" width="12.8" height="1.5" fill="#a6c8d7"/><rect x="0" y="9.2" width="12.8" height="1.5" fill="#a6c8d7"/></svg>
<svg class="a" style="left:770px;top:480px" width="18" height="17" viewBox="0 0 18 17" ><g transform="scale(1.2 1.2142857142857142)"><path d="M7.5 0L14.6 2.8L7.5 5.6L0.4 2.8Z" fill="#a6c8d7"/><path d="M0 4.1L6.7 6.9V14L0 11.3Z" fill="#a6c8d7"/><path d="M8.3 6.9L15 4.1V11.3L8.3 14Z" fill="#a6c8d7"/></g></svg>
<svg class="a" style="left:799px;top:480px" width="17" height="17" viewBox="0 0 17 17" ><rect x="0" y="2.7" width="1.8" height="11.4" fill="#a6c8d7"/><path d="M4.2 0H10.6L14.4 3.8V13.5A1.2 1.2 0 0 1 13.2 14.7H4.2A1.2 1.2 0 0 1 3 13.5V1.2A1.2 1.2 0 0 1 4.2 0Z" fill="#a6c8d7"/><path d="M10.8 1.8V3.6H12.6Z" fill="#fff"/><rect x="6" y="6.5" width="5.5" height="0.8" fill="#fff" opacity=".8"/><rect x="6" y="9.2" width="5.5" height="0.8" fill="#fff" opacity=".8"/><rect x="6" y="11.6" width="3" height="0.8" fill="#fff" opacity=".8"/><path d="M14.20,10.50L14.97,12.34L16.96,12.50L15.44,13.80L15.90,15.75L14.20,14.71L12.50,15.75L12.96,13.80L11.44,12.50L13.43,12.34Z" fill="#fff" stroke="#fff" stroke-width="2.2" stroke-linejoin="round"/><path d="M14.20,10.50L14.97,12.34L16.96,12.50L15.44,13.80L15.90,15.75L14.20,14.71L12.50,15.75L12.96,13.80L11.44,12.50L13.43,12.34Z" fill="#a6c8d7"/></svg>
<svg class="a" style="left:827px;top:480px" width="26" height="17" viewBox="0 0 26 17" ><path d="M0.8 0H22.2A0.8 0.8 0 0 1 23 0.8V14.7H0.8A0.8 0.8 0 0 1 0 13.9V0.8A0.8 0.8 0 0 1 0.8 0Z" fill="#a6c8d7"/><path d="M0.6 0.8L11.5 9.6L22.4 0.8" fill="none" stroke="#fff" stroke-width="1.1"/><path d="M0.8 14.2L8.2 8.2M21.5 12.5L15 8.2" fill="none" stroke="#fff" stroke-width="1.1"/><path d="M22.50,10.00L23.45,12.29L25.92,12.49L24.04,14.10L24.62,16.51L22.50,15.22L20.38,16.51L20.96,14.10L19.08,12.49L21.55,12.29Z" fill="#fff" stroke="#fff" stroke-width="2.4" stroke-linejoin="round"/><path d="M22.50,10.00L23.45,12.29L25.92,12.49L24.04,14.10L24.62,16.51L22.50,15.22L20.38,16.51L20.96,14.10L19.08,12.49L21.55,12.29Z" fill="#a6c8d7"/></svg>
<div class="cell" style="left:53px;top:505px;">23.02.2026 19:53:31</div>
<div class="cell" style="left:201px;top:505px;width:100px;text-align:right">65101</div>
<div class="cell" style="left:312px;top:505px;">DE</div>
<div class="cell" style="left:409px;top:505px;">Default Deutschla...</div>
<div class="a" style="left:571px;top:503px;width:16px;height:16px;background:#fff;border:1px solid #eceff0;border-radius:2px"></div>
<svg class="a" style="left:571px;top:503px" width="15" height="15" viewBox="0 0 15 15" ><path d="M3.2 7.6L6.2 10.4L11.8 4.4" fill="none" stroke="#2a72b0" stroke-width="1.5"/></svg>
<div class="cell" style="left:975px;top:505px;">NotInitialized</div>
<svg class="a" style="left:719px;top:503px" width="18" height="17" viewBox="0 0 18 17" ><path d="M0 5L7 2H11L18 5V14.7H14V5.5H4.2V14.7H0Z" fill="#1b6688"/><rect x="4" y="6.7" width="10" height="1.1" fill="#1b6688"/><rect x="4" y="9.5" width="10" height="1.1" fill="#1b6688"/><rect x="4" y="12.3" width="10" height="1.1" fill="#1b6688"/><rect x="4" y="14.2" width="10" height="0.5" fill="#1b6688"/><path d="M6 3A3 3 0 0 1 12 3Q12 5 10 10.7H8Q6 5 6 3Z" fill="#f00"/><ellipse cx="9" cy="14.8" rx="2" ry="1.9" fill="#f00"/></svg>
<svg class="a" style="left:744px;top:504px" width="17" height="17" viewBox="0 0 17 17" ><path d="M15.8 3A7.3 7.3 0 1 0 15.8 14" fill="none" stroke="#a6c8d7" stroke-width="1.9"/><rect x="0" y="5.8" width="12.8" height="1.5" fill="#a6c8d7"/><rect x="0" y="9.2" width="12.8" height="1.5" fill="#a6c8d7"/></svg>
<svg class="a" style="left:770px;top:504px" width="18" height="17" viewBox="0 0 18 17" ><g transform="scale(1.2 1.2142857142857142)"><path d="M7.5 0L14.6 2.8L7.5 5.6L0.4 2.8Z" fill="#a6c8d7"/><path d="M0 4.1L6.7 6.9V14L0 11.3Z" fill="#a6c8d7"/><path d="M8.3 6.9L15 4.1V11.3L8.3 14Z" fill="#a6c8d7"/></g></svg>
<svg class="a" style="left:799px;top:504px" width="17" height="17" viewBox="0 0 17 17" ><rect x="0" y="2.7" width="1.8" height="11.4" fill="#a6c8d7"/><path d="M4.2 0H10.6L14.4 3.8V13.5A1.2 1.2 0 0 1 13.2 14.7H4.2A1.2 1.2 0 0 1 3 13.5V1.2A1.2 1.2 0 0 1 4.2 0Z" fill="#a6c8d7"/><path d="M10.8 1.8V3.6H12.6Z" fill="#fff"/><rect x="6" y="6.5" width="5.5" height="0.8" fill="#fff" opacity=".8"/><rect x="6" y="9.2" width="5.5" height="0.8" fill="#fff" opacity=".8"/><rect x="6" y="11.6" width="3" height="0.8" fill="#fff" opacity=".8"/><path d="M14.20,10.50L14.97,12.34L16.96,12.50L15.44,13.80L15.90,15.75L14.20,14.71L12.50,15.75L12.96,13.80L11.44,12.50L13.43,12.34Z" fill="#fff" stroke="#fff" stroke-width="2.2" stroke-linejoin="round"/><path d="M14.20,10.50L14.97,12.34L16.96,12.50L15.44,13.80L15.90,15.75L14.20,14.71L12.50,15.75L12.96,13.80L11.44,12.50L13.43,12.34Z" fill="#a6c8d7"/></svg>
<svg class="a" style="left:827px;top:504px" width="26" height="17" viewBox="0 0 26 17" ><path d="M0.8 0H22.2A0.8 0.8 0 0 1 23 0.8V14.7H0.8A0.8 0.8 0 0 1 0 13.9V0.8A0.8 0.8 0 0 1 0.8 0Z" fill="#a6c8d7"/><path d="M0.6 0.8L11.5 9.6L22.4 0.8" fill="none" stroke="#fff" stroke-width="1.1"/><path d="M0.8 14.2L8.2 8.2M21.5 12.5L15 8.2" fill="none" stroke="#fff" stroke-width="1.1"/><path d="M22.50,10.00L23.45,12.29L25.92,12.49L24.04,14.10L24.62,16.51L22.50,15.22L20.38,16.51L20.96,14.10L19.08,12.49L21.55,12.29Z" fill="#fff" stroke="#fff" stroke-width="2.4" stroke-linejoin="round"/><path d="M22.50,10.00L23.45,12.29L25.92,12.49L24.04,14.10L24.62,16.51L22.50,15.22L20.38,16.51L20.96,14.10L19.08,12.49L21.55,12.29Z" fill="#a6c8d7"/></svg>
<div class="cell" style="left:53px;top:529px;">23.02.2026 19:45:39</div>
<div class="cell" style="left:201px;top:529px;width:100px;text-align:right">65100</div>
<div class="cell" style="left:312px;top:529px;">DE</div>
<div class="cell" style="left:409px;top:529px;">Default Deutschla...</div>
<div class="a" style="left:571px;top:527px;width:16px;height:16px;background:#fff;border:1px solid #eceff0;border-radius:2px"></div>
<svg class="a" style="left:571px;top:527px" width="15" height="15" viewBox="0 0 15 15" ><path d="M3.2 7.6L6.2 10.4L11.8 4.4" fill="none" stroke="#2a72b0" stroke-width="1.5"/></svg>
<div class="cell" style="left:975px;top:529px;">NotInitialized</div>
<svg class="a" style="left:719px;top:527px" width="18" height="17" viewBox="0 0 18 17" ><path d="M0 5L7 2H11L18 5V14.7H14V5.5H4.2V14.7H0Z" fill="#1b6688"/><rect x="4" y="6.7" width="10" height="1.1" fill="#1b6688"/><rect x="4" y="9.5" width="10" height="1.1" fill="#1b6688"/><rect x="4" y="12.3" width="10" height="1.1" fill="#1b6688"/><rect x="4" y="14.2" width="10" height="0.5" fill="#1b6688"/><path d="M6 3A3 3 0 0 1 12 3Q12 5 10 10.7H8Q6 5 6 3Z" fill="#f00"/><ellipse cx="9" cy="14.8" rx="2" ry="1.9" fill="#f00"/></svg>
<svg class="a" style="left:744px;top:528px" width="17" height="17" viewBox="0 0 17 17" ><path d="M15.8 3A7.3 7.3 0 1 0 15.8 14" fill="none" stroke="#a6c8d7" stroke-width="1.9"/><rect x="0" y="5.8" width="12.8" height="1.5" fill="#a6c8d7"/><rect x="0" y="9.2" width="12.8" height="1.5" fill="#a6c8d7"/></svg>
<svg class="a" style="left:770px;top:528px" width="18" height="17" viewBox="0 0 18 17" ><g transform="scale(1.2 1.2142857142857142)"><path d="M7.5 0L14.6 2.8L7.5 5.6L0.4 2.8Z" fill="#a6c8d7"/><path d="M0 4.1L6.7 6.9V14L0 11.3Z" fill="#a6c8d7"/><path d="M8.3 6.9L15 4.1V11.3L8.3 14Z" fill="#a6c8d7"/></g></svg>
<svg class="a" style="left:799px;top:528px" width="17" height="17" viewBox="0 0 17 17" ><rect x="0" y="2.7" width="1.8" height="11.4" fill="#a6c8d7"/><path d="M4.2 0H10.6L14.4 3.8V13.5A1.2 1.2 0 0 1 13.2 14.7H4.2A1.2 1.2 0 0 1 3 13.5V1.2A1.2 1.2 0 0 1 4.2 0Z" fill="#a6c8d7"/><path d="M10.8 1.8V3.6H12.6Z" fill="#fff"/><rect x="6" y="6.5" width="5.5" height="0.8" fill="#fff" opacity=".8"/><rect x="6" y="9.2" width="5.5" height="0.8" fill="#fff" opacity=".8"/><rect x="6" y="11.6" width="3" height="0.8" fill="#fff" opacity=".8"/><path d="M14.20,10.50L14.97,12.34L16.96,12.50L15.44,13.80L15.90,15.75L14.20,14.71L12.50,15.75L12.96,13.80L11.44,12.50L13.43,12.34Z" fill="#fff" stroke="#fff" stroke-width="2.2" stroke-linejoin="round"/><path d="M14.20,10.50L14.97,12.34L16.96,12.50L15.44,13.80L15.90,15.75L14.20,14.71L12.50,15.75L12.96,13.80L11.44,12.50L13.43,12.34Z" fill="#a6c8d7"/></svg>
<svg class="a" style="left:827px;top:528px" width="26" height="17" viewBox="0 0 26 17" ><path d="M0.8 0H22.2A0.8 0.8 0 0 1 23 0.8V14.7H0.8A0.8 0.8 0 0 1 0 13.9V0.8A0.8 0.8 0 0 1 0.8 0Z" fill="#a6c8d7"/><path d="M0.6 0.8L11.5 9.6L22.4 0.8" fill="none" stroke="#fff" stroke-width="1.1"/><path d="M0.8 14.2L8.2 8.2M21.5 12.5L15 8.2" fill="none" stroke="#fff" stroke-width="1.1"/><path d="M22.50,10.00L23.45,12.29L25.92,12.49L24.04,14.10L24.62,16.51L22.50,15.22L20.38,16.51L20.96,14.10L19.08,12.49L21.55,12.29Z" fill="#fff" stroke="#fff" stroke-width="2.4" stroke-linejoin="round"/><path d="M22.50,10.00L23.45,12.29L25.92,12.49L24.04,14.10L24.62,16.51L22.50,15.22L20.38,16.51L20.96,14.10L19.08,12.49L21.55,12.29Z" fill="#a6c8d7"/></svg>
<div class="cell" style="left:53px;top:553px;">23.02.2026 18:53:43</div>
<div class="cell" style="left:201px;top:553px;width:100px;text-align:right">65099</div>
<div class="cell" style="left:312px;top:553px;">DE</div>
<div class="cell" style="left:409px;top:553px;">Default Deutschla...</div>
<div class="a" style="left:571px;top:551px;width:16px;height:16px;background:#fff;border:1px solid #eceff0;border-radius:2px"></div>
<svg class="a" style="left:571px;top:551px" width="15" height="15" viewBox="0 0 15 15" ><path d="M3.2 7.6L6.2 10.4L11.8 4.4" fill="none" stroke="#2a72b0" stroke-width="1.5"/></svg>
<div class="cell" style="left:975px;top:553px;">NotInitialized</div>
<svg class="a" style="left:719px;top:551px" width="18" height="17" viewBox="0 0 18 17" ><path d="M0 5L7 2H11L18 5V14.7H14V5.5H4.2V14.7H0Z" fill="#1b6688"/><rect x="4" y="6.7" width="10" height="1.1" fill="#1b6688"/><rect x="4" y="9.5" width="10" height="1.1" fill="#1b6688"/><rect x="4" y="12.3" width="10" height="1.1" fill="#1b6688"/><rect x="4" y="14.2" width="10" height="0.5" fill="#1b6688"/><path d="M6 3A3 3 0 0 1 12 3Q12 5 10 10.7H8Q6 5 6 3Z" fill="#f00"/><ellipse cx="9" cy="14.8" rx="2" ry="1.9" fill="#f00"/></svg>
<svg class="a" style="left:744px;top:552px" width="17" height="17" viewBox="0 0 17 17" ><path d="M15.8 3A7.3 7.3 0 1 0 15.8 14" fill="none" stroke="#a6c8d7" stroke-width="1.9"/><rect x="0" y="5.8" width="12.8" height="1.5" fill="#a6c8d7"/><rect x="0" y="9.2" width="12.8" height="1.5" fill="#a6c8d7"/></svg>
<svg class="a" style="left:770px;top:552px" width="18" height="17" viewBox="0 0 18 17" ><g transform="scale(1.2 1.2142857142857142)"><path d="M7.5 0L14.6 2.8L7.5 5.6L0.4 2.8Z" fill="#a6c8d7"/><path d="M0 4.1L6.7 6.9V14L0 11.3Z" fill="#a6c8d7"/><path d="M8.3 6.9L15 4.1V11.3L8.3 14Z" fill="#a6c8d7"/></g></svg>
<svg class="a" style="left:799px;top:552px" width="17" height="17" viewBox="0 0 17 17" ><rect x="0" y="2.7" width="1.8" height="11.4" fill="#a6c8d7"/><path d="M4.2 0H10.6L14.4 3.8V13.5A1.2 1.2 0 0 1 13.2 14.7H4.2A1.2 1.2 0 0 1 3 13.5V1.2A1.2 1.2 0 0 1 4.2 0Z" fill="#a6c8d7"/><path d="M10.8 1.8V3.6H12.6Z" fill="#fff"/><rect x="6" y="6.5" width="5.5" height="0.8" fill="#fff" opacity=".8"/><rect x="6" y="9.2" width="5.5" height="0.8" fill="#fff" opacity=".8"/><rect x="6" y="11.6" width="3" height="0.8" fill="#fff" opacity=".8"/><path d="M14.20,10.50L14.97,12.34L16.96,12.50L15.44,13.80L15.90,15.75L14.20,14.71L12.50,15.75L12.96,13.80L11.44,12.50L13.43,12.34Z" fill="#fff" stroke="#fff" stroke-width="2.2" stroke-linejoin="round"/><path d="M14.20,10.50L14.97,12.34L16.96,12.50L15.44,13.80L15.90,15.75L14.20,14.71L12.50,15.75L12.96,13.80L11.44,12.50L13.43,12.34Z" fill="#a6c8d7"/></svg>
<svg class="a" style="left:827px;top:552px" width="26" height="17" viewBox="0 0 26 17" ><path d="M0.8 0H22.2A0.8 0.8 0 0 1 23 0.8V14.7H0.8A0.8 0.8 0 0 1 0 13.9V0.8A0.8 0.8 0 0 1 0.8 0Z" fill="#a6c8d7"/><path d="M0.6 0.8L11.5 9.6L22.4 0.8" fill="none" stroke="#fff" stroke-width="1.1"/><path d="M0.8 14.2L8.2 8.2M21.5 12.5L15 8.2" fill="none" stroke="#fff" stroke-width="1.1"/><path d="M22.50,10.00L23.45,12.29L25.92,12.49L24.04,14.10L24.62,16.51L22.50,15.22L20.38,16.51L20.96,14.10L19.08,12.49L21.55,12.29Z" fill="#fff" stroke="#fff" stroke-width="2.4" stroke-linejoin="round"/><path d="M22.50,10.00L23.45,12.29L25.92,12.49L24.04,14.10L24.62,16.51L22.50,15.22L20.38,16.51L20.96,14.10L19.08,12.49L21.55,12.29Z" fill="#a6c8d7"/></svg>
<div class="cell" style="left:53px;top:578px;">23.02.2026 14:54:50</div>
<div class="cell" style="left:201px;top:578px;width:100px;text-align:right">65098</div>
<div class="cell" style="left:312px;top:578px;">DE</div>
<div class="cell" style="left:409px;top:578px;">Default Deutschla...</div>
<div class="a" style="left:571px;top:575px;width:16px;height:16px;background:#fff;border:1px solid #eceff0;border-radius:2px"></div>
<div class="cell" style="left:975px;top:578px;">NotRequired</div>
<svg class="a" style="left:719px;top:575px" width="18" height="17" viewBox="0 0 18 17" ><path d="M0 5L7 2H11L18 5V14.7H14V5.5H4.2V14.7H0Z" fill="#1b6688"/><rect x="4" y="6.7" width="10" height="1.1" fill="#1b6688"/><rect x="4" y="9.5" width="10" height="1.1" fill="#1b6688"/><rect x="4" y="12.3" width="10" height="1.1" fill="#1b6688"/><rect x="4" y="14.2" width="10" height="0.5" fill="#1b6688"/><path d="M6 3A3 3 0 0 1 12 3Q12 5 10 10.7H8Q6 5 6 3Z" fill="#f00"/><ellipse cx="9" cy="14.8" rx="2" ry="1.9" fill="#f00"/></svg>
<svg class="a" style="left:744px;top:576px" width="17" height="17" viewBox="0 0 17 17" ><path d="M15.8 3A7.3 7.3 0 1 0 15.8 14" fill="none" stroke="#a6c8d7" stroke-width="1.9"/><rect x="0" y="5.8" width="12.8" height="1.5" fill="#a6c8d7"/><rect x="0" y="9.2" width="12.8" height="1.5" fill="#a6c8d7"/></svg>
<svg class="a" style="left:770px;top:576px" width="18" height="17" viewBox="0 0 18 17" ><g transform="scale(1.2 1.2142857142857142)"><path d="M7.5 0L14.6 2.8L7.5 5.6L0.4 2.8Z" fill="#a6c8d7"/><path d="M0 4.1L6.7 6.9V14L0 11.3Z" fill="#a6c8d7"/><path d="M8.3 6.9L15 4.1V11.3L8.3 14Z" fill="#a6c8d7"/></g></svg>
<svg class="a" style="left:799px;top:576px" width="17" height="17" viewBox="0 0 17 17" ><rect x="0" y="2.7" width="1.8" height="11.4" fill="#a6c8d7"/><path d="M4.2 0H10.6L14.4 3.8V13.5A1.2 1.2 0 0 1 13.2 14.7H4.2A1.2 1.2 0 0 1 3 13.5V1.2A1.2 1.2 0 0 1 4.2 0Z" fill="#a6c8d7"/><path d="M10.8 1.8V3.6H12.6Z" fill="#fff"/><rect x="6" y="6.5" width="5.5" height="0.8" fill="#fff" opacity=".8"/><rect x="6" y="9.2" width="5.5" height="0.8" fill="#fff" opacity=".8"/><rect x="6" y="11.6" width="3" height="0.8" fill="#fff" opacity=".8"/><path d="M14.20,10.50L14.97,12.34L16.96,12.50L15.44,13.80L15.90,15.75L14.20,14.71L12.50,15.75L12.96,13.80L11.44,12.50L13.43,12.34Z" fill="#fff" stroke="#fff" stroke-width="2.2" stroke-linejoin="round"/><path d="M14.20,10.50L14.97,12.34L16.96,12.50L15.44,13.80L15.90,15.75L14.20,14.71L12.50,15.75L12.96,13.80L11.44,12.50L13.43,12.34Z" fill="#a6c8d7"/></svg>
<svg class="a" style="left:827px;top:576px" width="26" height="17" viewBox="0 0 26 17" ><path d="M0.8 0H22.2A0.8 0.8 0 0 1 23 0.8V14.7H0.8A0.8 0.8 0 0 1 0 13.9V0.8A0.8 0.8 0 0 1 0.8 0Z" fill="#a6c8d7"/><path d="M0.6 0.8L11.5 9.6L22.4 0.8" fill="none" stroke="#fff" stroke-width="1.1"/><path d="M0.8 14.2L8.2 8.2M21.5 12.5L15 8.2" fill="none" stroke="#fff" stroke-width="1.1"/><path d="M22.50,10.00L23.45,12.29L25.92,12.49L24.04,14.10L24.62,16.51L22.50,15.22L20.38,16.51L20.96,14.10L19.08,12.49L21.55,12.29Z" fill="#fff" stroke="#fff" stroke-width="2.4" stroke-linejoin="round"/><path d="M22.50,10.00L23.45,12.29L25.92,12.49L24.04,14.10L24.62,16.51L22.50,15.22L20.38,16.51L20.96,14.10L19.08,12.49L21.55,12.29Z" fill="#a6c8d7"/></svg>
<svg class="a" style="left:695px;top:551px" width="18" height="17" viewBox="0 0 18 17" ><path d="M0 5L7 2H11L18 5V14.7H14V5.5H4.2V14.7H0Z" fill="#1b6688"/><rect x="4" y="6.7" width="10" height="1.1" fill="#1b6688"/><rect x="4" y="9.5" width="10" height="1.1" fill="#1b6688"/><rect x="4" y="12.3" width="10" height="1.1" fill="#1b6688"/><rect x="4" y="14.2" width="10" height="0.5" fill="#1b6688"/></svg>
<svg class="a" style="left:694px;top:550px" width="20" height="18" viewBox="0 0 20 18" ><path d="M2 1L18 17M18 1L2 17" stroke="#e02020" stroke-width="1.8"/></svg>
<svg class="a" style="left:695px;top:575px" width="19" height="18" viewBox="0 0 19 18" ><circle cx="9.5" cy="9" r="8.3" fill="none" stroke="#1b6688" stroke-width="0.9"/><circle cx="9.5" cy="9" r="6" fill="#1b6688"/><path d="M3.5 9H15.5M9.5 3V15M4.5 6H14.5M4.5 12H14.5" stroke="#fff" stroke-width="0.7"/><ellipse cx="9.5" cy="9" rx="2.6" ry="6" fill="none" stroke="#fff" stroke-width="0.7"/></svg>
<svg class="a" style="left:770px;top:576px" width="18" height="17" viewBox="0 0 18 17" ><g transform="scale(1.2 1.2142857142857142)"><path d="M7.5 0L14.6 2.8L7.5 5.6L0.4 2.8Z" fill="#1b6688"/><path d="M0 4.1L6.7 6.9V14L0 11.3Z" fill="#1b6688"/><path d="M8.3 6.9L15 4.1V11.3L8.3 14Z" fill="#1b6688"/></g></svg>
<svg class="a" style="left:770px;top:576px" width="18" height="17" viewBox="0 0 18 17" ><path d="M2.5 16L17 1.5M2 0.5L17 16" stroke="#f01818" stroke-width="1.8"/></svg>
<div class="a" style="left:804px;top:556px;width:36px;height:36px;border-radius:50%;background:rgba(255,255,140,.62)"></div>
<svg class="a" style="left:771px;top:575px" width="13" height="19" viewBox="0 0 13 19" ><path d="M0.8 0.8V15.2L3.6 12.8L5.6 17L8.4 16L6.8 12L11.4 11.8Z" fill="#fff" stroke="#000" stroke-width="1.1" stroke-linejoin="round"/></svg>
<div class="a" style="left:16px;top:599px;width:982px;height:1px;background:#e0e0e0;"></div>
<div class="a" style="left:16px;top:594px;width:760px;height:4px;background:#1b6584;border-radius:2px"></div>
</body></html>
